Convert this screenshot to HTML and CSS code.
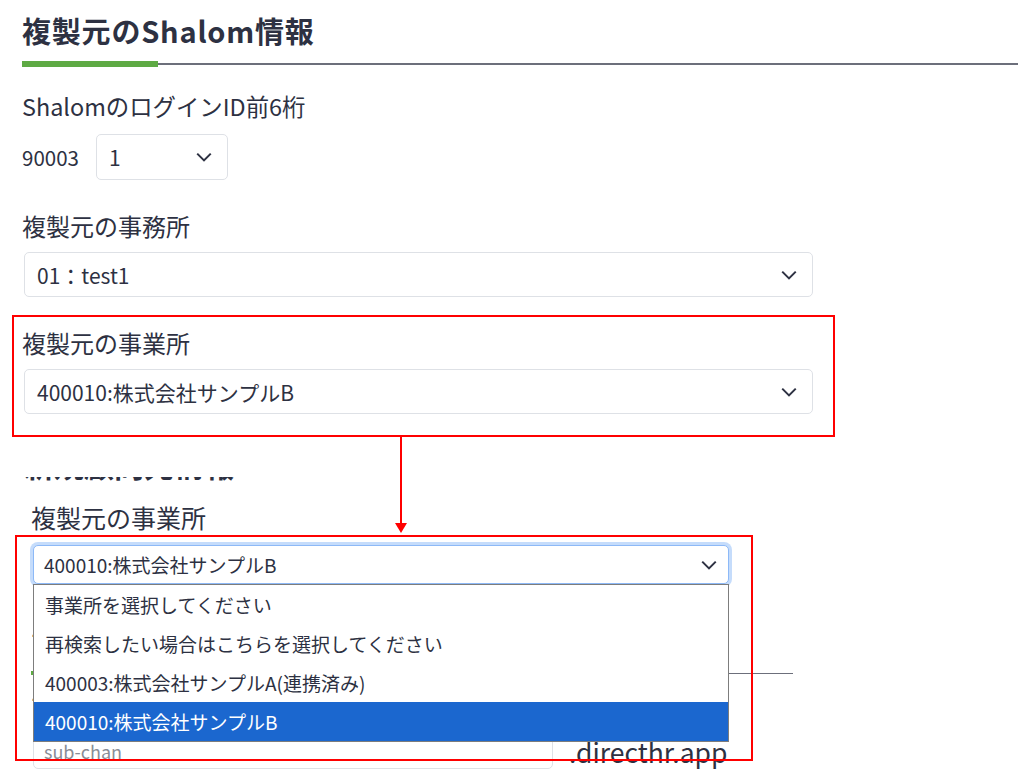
FILE: index.html
```html
<!DOCTYPE html>
<html lang="ja">
<head>
    <meta charset="UTF-8">
    <meta name="viewport" content="width=device-width, initial-scale=1.0">
    <title>複製元のShalom情報</title>
    <link rel="stylesheet" href="styles.css">
</head>
<body>
    <div class="page">
        <h1 class="title">複製元のShalom情報</h1>
        <div class="rule">
            <span class="rule-green"></span>
            <span class="rule-gray"></span>
        </div>

        <div class="field-label first">ShalomのログインID前6桁</div>
        <div class="login-row">
            <span class="login-prefix">90003</span>
            <div class="select small">
                <span>1</span>
                <svg class="chevron" viewBox="0 0 16 16"><path d="M2 5 8 11l6-6"/></svg>
            </div>
        </div>

        <div class="field-label">複製元の事務所</div>
        <div class="select wide">
            <span>01：test1</span>
            <svg class="chevron" viewBox="0 0 16 16"><path d="M2 5 8 11l6-6"/></svg>
        </div>

        <div class="field-label">複製元の事業所</div>
        <div class="select wide">
            <span>400010:株式会社サンプルB</span>
            <svg class="chevron" viewBox="0 0 16 16"><path d="M2 5 8 11l6-6"/></svg>
        </div>
    </div>

    <!-- second capture: the open dropdown -->
    <div class="shot2">
        <h2 class="shot2-title">新規顧問先情報</h2>
        <div class="field-label sub">複製元の事業所</div>
        <div class="select focus">
            <span>400010:株式会社サンプルB</span>
            <svg class="chevron" viewBox="0 0 16 16"><path d="M2 5 8 11l6-6"/></svg>
            <ul class="options">
                <li>事業所を選択してください</li>
                <li>再検索したい場合はこちらを選択してください</li>
                <li>400003:株式会社サンプルA(連携済み)</li>
                <li class="selected">400010:株式会社サンプルB</li>
            </ul>
        </div>

        <div class="field-label sub behind">サブドメイン</div>
        <div class="rule short">
            <span class="rule-green small"></span>
            <span class="rule-gray thin"></span>
        </div>
        <div class="field-label sub behind2">サブドメイン</div>
        <div class="domain-row">
            <div class="input">sub-chan</div>
            <span class="domain">.directhr.app</span>
        </div>
    </div>

    <!-- annotations -->
    <div class="mark mark-one"></div>
    <div class="mark mark-two"></div>
    <div class="arrow"></div>
</body>
</html>
```

FILE: styles.css
```css
body {
    margin: 0;
    background: #ffffff;
    color: #2d3142;
    font-family: "Noto Sans CJK JP", "Noto Sans", sans-serif;
    position: relative;
    height: 781px;
    overflow: hidden;
}
.page {
    padding: 0 6px 0 22px;
}
.title {
    margin: 0;
    padding-top: 10px;
    font-size: 29px;
    line-height: 40px;
    font-weight: 700;
    letter-spacing: 0.8px;
}
.rule {
    display: flex;
    align-items: center;
    margin-top: 11px;
    height: 6px;
}
.rule-green {
    width: 136px;
    height: 6px;
    background: #5eaa44;
}
.rule-gray {
    flex: 1;
    height: 2px;
    background: #6c6f7b;
}
.field-label {
    font-size: 24px;
    line-height: 34px;
    margin-top: 29px;
}
.field-label.first {
    margin-top: 22px;
    font-size: 23.4px;
}
.login-row {
    display: flex;
    align-items: center;
    gap: 17px;
    margin-top: 11px;
}
.login-prefix {
    font-size: 20.5px;
}
.select {
    position: relative;
    display: flex;
    align-items: center;
    justify-content: space-between;
    box-sizing: border-box;
    border: 1px solid #dee1e6;
    border-radius: 5px;
    background: #fff;
    font-size: 21px;
    padding: 0 14px 0 12px;
}
.select.small {
    width: 132px;
    height: 46px;
}
.select.wide {
    width: 789px;
    height: 45px;
    margin: 9px 0 0 2px;
}
.chevron {
    width: 18px;
    height: 18px;
    fill: none;
    stroke: #2d3142;
    stroke-width: 1.8;
}

/* second capture */
.shot2 {
    margin-top: 63px;
    height: 303px;
    overflow: hidden;
    padding-left: 31px;
}
.shot2-title {
    margin: -28px 0 0 -7px;
    font-size: 30px;
    line-height: 30px;
    font-weight: 700;
}
.field-label.sub {
    font-size: 25px;
    margin-top: 21px;
}
.select.focus {
    width: 696px;
    height: 39px;
    margin: 11px 0 0 2px;
    font-size: 19px;
    padding: 0 10px 0 10px;
    border-color: #8db9f7;
    box-shadow: 0 0 0 3px #c5dcfb;
    z-index: 2;
}
.options {
    position: absolute;
    top: 100%;
    left: -1px;
    width: 696px;
    margin: 1px 0 0;
    padding: 0;
    list-style: none;
    background: #fff;
    border: 1px solid #7d7d7d;
    box-sizing: border-box;
}
.options li {
    height: 39px;
    line-height: 39px;
    padding-left: 11px;
    font-size: 19px;
    color: #2d3142;
}
.options li.selected {
    background: #1b67cf;
    color: #ffffff;
}
.field-label.behind {
    margin-top: 37px;
}
.rule.short {
    width: 762px;
    margin-top: 16px;
    height: 4px;
}
.rule-green.small {
    height: 4px;
}
.rule-gray.thin {
    height: 1px;
}
.field-label.behind2 {
    margin-top: 10px;
}
.domain-row {
    display: flex;
    align-items: center;
    gap: 16px;
    margin-top: 17px;
}
.input {
    width: 520px;
    height: 33px;
    margin-left: 2px;
    box-sizing: border-box;
    border: 1px solid #dee1e6;
    border-radius: 5px;
    padding: 0 10px;
    line-height: 28px;
    font-size: 18px;
    color: #8a8d96;
}
.domain {
    font-size: 26.5px;
    line-height: 30px;
    margin-top: -2px;
}

/* red annotations */
.mark {
    position: absolute;
    border: 2px solid #ff0000;
    box-sizing: border-box;
    z-index: 5;
}
.mark-one {
    left: 12px;
    top: 315px;
    width: 823px;
    height: 122px;
}
.mark-two {
    left: 15px;
    top: 535px;
    width: 738px;
    height: 226px;
}
.arrow {
    position: absolute;
    left: 400px;
    top: 436px;
    width: 2px;
    height: 88px;
    background: #ff0000;
    z-index: 5;
}
.arrow::after {
    content: "";
    position: absolute;
    left: -5px;
    bottom: -9px;
    border-left: 6px solid transparent;
    border-right: 6px solid transparent;
    border-top: 10px solid #ff0000;
}
```
